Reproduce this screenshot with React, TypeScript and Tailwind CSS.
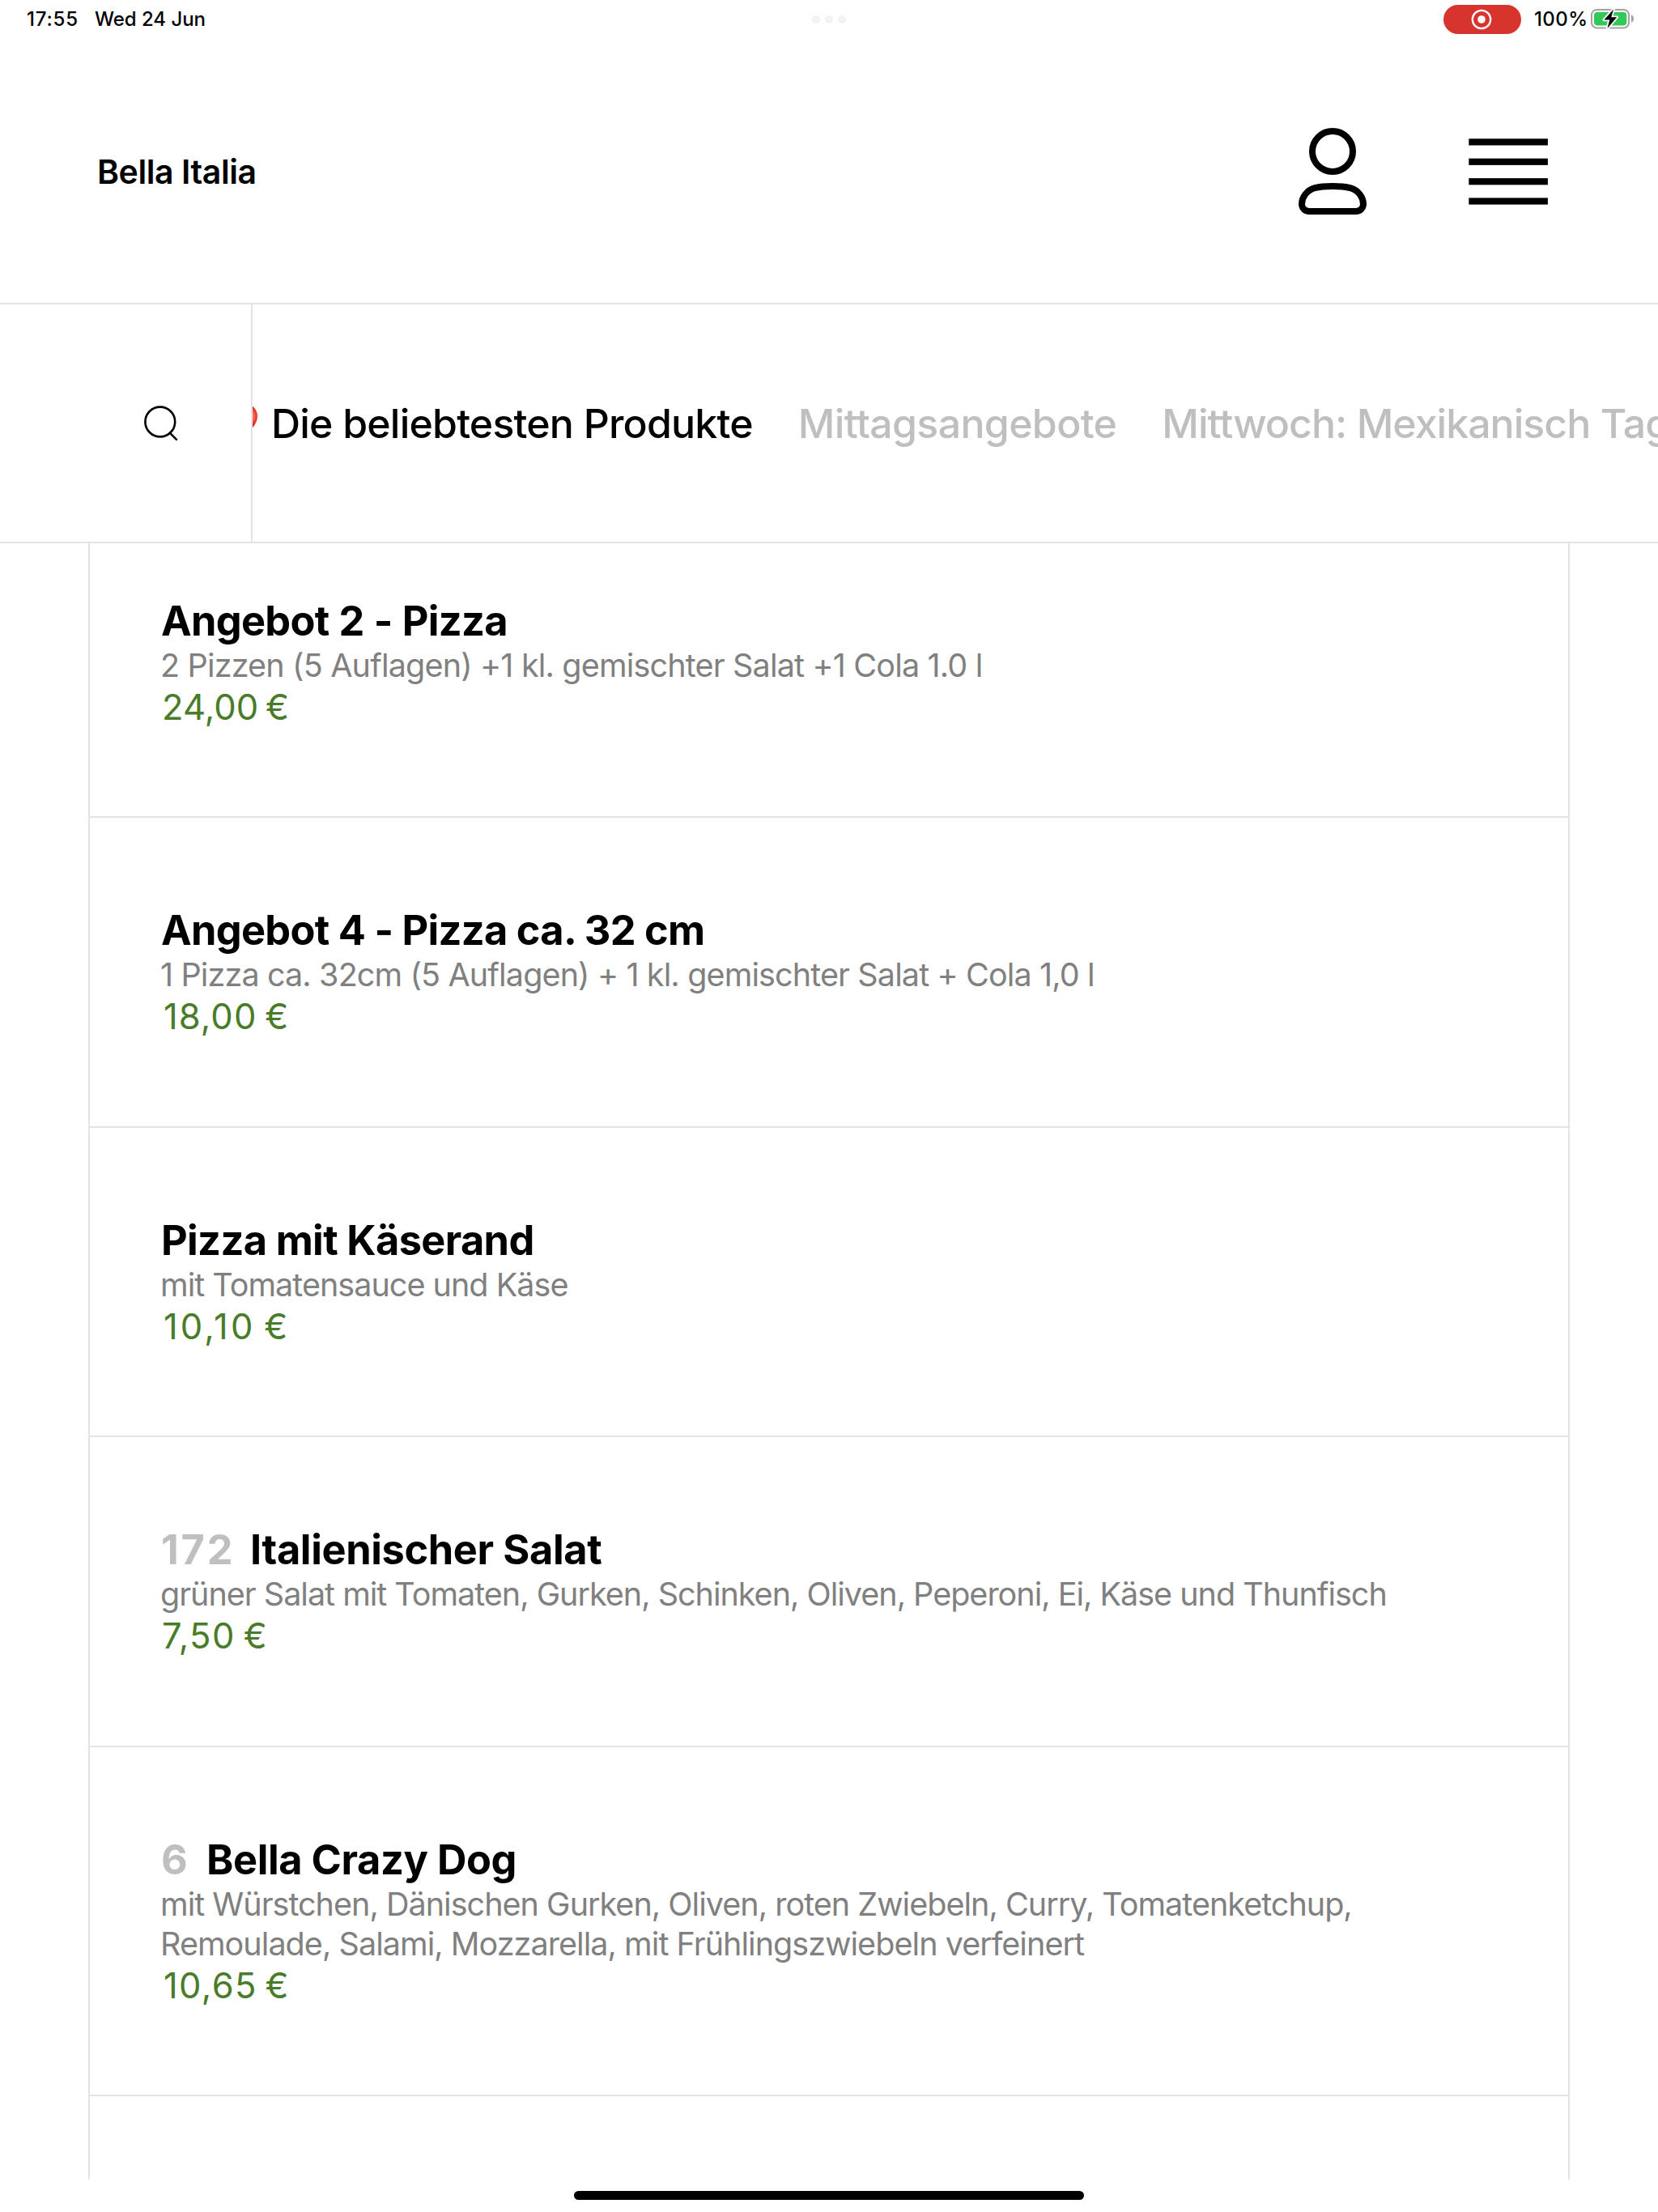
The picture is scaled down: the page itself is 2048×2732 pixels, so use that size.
type Product = {
  number?: { text: string; className: string };
  title: { text: string; className: string };
  description: { text: string; className: string }[];
  price: { text: string; className: string };
  className: string;
};

const products: Product[] = [
  {
    title: { text: "Angebot 2 - Pizza", className: "pl-px tracking-[-0.7px] [word-spacing:0.8px]" },
    description: [
      {
        text: "2 Pizzen (5 Auflagen) +1 kl. gemischter Salat +1 Cola 1.0 l",
        className: "tracking-[-0.822px]",
      },
    ],
    price: { text: "24,00 €", className: "pl-0.5 tracking-[0.1px] [word-spacing:-3.6px]" },
    className: "h-[339px] pt-[66px]",
  },
  {
    title: {
      text: "Angebot 4 - Pizza ca. 32 cm",
      className: "pl-px tracking-[-0.709px]",
    },
    description: [
      {
        text: "1 Pizza ca. 32cm (5 Auflagen) + 1 kl. gemischter Salat + Cola 1,0 l",
        className: "tracking-[-0.866px]",
      },
    ],
    price: { text: "18,00 €", className: "pl-1 tracking-[1.1px] [word-spacing:-3.6px]" },
    className: "h-[383px] pt-[109px]",
  },
  {
    title: { text: "Pizza mit Käserand", className: "pl-px tracking-[-0.647px]" },
    description: [{ text: "mit Tomatensauce und Käse", className: "tracking-[-0.968px]" }],
    price: { text: "10,10 €", className: "pl-1 tracking-[3.1px] [word-spacing:-4.5px]" },
    className: "h-[382px] pt-[109px]",
  },
  {
    number: { text: "172", className: "w-[111px] pl-px tracking-[2.8px]" },
    title: { text: "Italienischer Salat", className: "tracking-[-0.38px]" },
    description: [
      {
        text: "grüner Salat mit Tomaten, Gurken, Schinken, Oliven, Peperoni, Ei, Käse und Thunfisch",
        className: "tracking-[-0.997px]",
      },
    ],
    price: { text: "7,50 €", className: "pl-0.5 tracking-[1.5px] [word-spacing:-4px]" },
    className: "h-[383px] pt-[109px]",
  },
  {
    number: { text: "6", className: "w-[57px] pl-px" },
    title: { text: "Bella Crazy Dog", className: "tracking-[-0.42px]" },
    description: [
      {
        text: "mit Würstchen, Dänischen Gurken, Oliven, roten Zwiebeln, Curry, Tomatenketchup,",
        className: "tracking-[-0.969px]",
      },
      {
        text: "Remoulade, Salami, Mozzarella, mit Frühlingszwiebeln verfeinert",
        className: "tracking-[-0.949px]",
      },
    ],
    price: { text: "10,65 €", className: "pl-1 tracking-[1.4px] [word-spacing:-4px]" },
    className: "h-[431px] pt-[109px]",
  },
];

function BatteryIcon() {
  return (
    <svg width="54" height="27" viewBox="0 0 54 27" fill="none">
      <rect x="1" y="2" width="46" height="22.4" rx="6.5" stroke="#a3a3a3" strokeWidth="2" />
      <rect x="4" y="5" width="40.3" height="16.4" rx="3.8" fill="#34c759" />
      <path d="M50 8.2c2 .8 3 2.6 3 4.8s-1 4-3 4.8z" fill="#a3a3a3" />
      <path
        d="M28 1.5 16.4 14.4h6.8L20.5 25 32.2 11.2h-6.9z"
        fill="#000"
        stroke="#fff"
        strokeWidth="3.6"
        strokeLinejoin="round"
        paintOrder="stroke"
      />
    </svg>
  );
}

function StatusBar() {
  return (
    <div className="relative flex h-[50px] items-center pb-[3px] pl-[33px] text-2xl leading-8 font-[450]">
      <span className="w-[84px] tracking-[0.8px]">17:55</span>
      <span className="tracking-[-0.05px]">Wed 24 Jun</span>
      <div className="absolute top-[19px] left-[1003px] flex gap-1.5">
        <span className="size-2.5 rounded-full bg-[#f2f2f4]" />
        <span className="size-2.5 rounded-full bg-[#f2f2f4]" />
        <span className="size-2.5 rounded-full bg-[#f2f2f4]" />
      </div>
      <div className="ml-auto flex items-center pr-[29px]">
        <span className="mr-4 flex h-9 w-24 items-center justify-center rounded-full bg-[#d6342c] pr-0.5">
          <svg width="26" height="26" viewBox="0 0 26 26" fill="none">
            <circle cx="13" cy="13" r="11.2" stroke="#fff" strokeWidth="2.3" />
            <circle cx="13" cy="13" r="4.8" fill="#fff" />
          </svg>
        </span>
        <span className="w-[70px] tracking-[0.4px]">100%</span>
        <BatteryIcon />
      </div>
    </div>
  );
}

function Header() {
  return (
    <header className="flex h-[326px] items-center border-b-2 border-[#e4e4e4] pr-[136px] pl-[120px]">
      <h1 className="pt-0.5 text-[41px] font-semibold tracking-[-0.43px]">Bella Italia</h1>
      <button className="mr-[126px] mb-0.5 ml-auto" aria-label="Konto">
        <svg width="84" height="108" viewBox="0 0 84 108" fill="none" stroke="#000" strokeWidth="8">
          <circle cx="42" cy="30" r="25" />
          <path d="M13 104H71C76 104 80 100 80 95C80 87 74 78 64 75.2C58 73.6 50 73 42 73C34 73 26 73.6 20 75.2C10 78 4 87 4 95C4 100 8 104 13 104Z" />
        </svg>
      </button>
      <button aria-label="Menü">
        <svg width="98" height="82" viewBox="0 0 98 82">
          <rect x="0.3" y="0.3" width="97.6" height="8.2" />
          <rect x="0.3" y="24.7" width="97.6" height="8.2" />
          <rect x="0.3" y="49.1" width="97.6" height="8.2" />
          <rect x="0.3" y="73.4" width="97.6" height="8.2" />
        </svg>
      </button>
    </header>
  );
}

function HeartIcon() {
  return (
    <svg className="-ml-11 shrink-0" width="50" height="50" viewBox="0 0 50 50">
      <defs>
        <radialGradient id="heart" gradientUnits="userSpaceOnUse" cx="37" cy="16" r="14">
          <stop offset="0" stopColor="#ff9c90" />
          <stop offset="0.5" stopColor="#f5806f" />
          <stop offset="0.85" stopColor="#ee3a2a" />
          <stop offset="1" stopColor="#cf1f14" />
        </radialGradient>
      </defs>
      <path
        d="M37 1C45 2 50 9 50 16C50 27 38 38 25 46C12 38 0 27 0 16C0 9 5 2 13 1C18 1 23 4 25 8C27 4 32 1 37 1Z"
        fill="url(#heart)"
      />
    </svg>
  );
}

function CategoryBar() {
  return (
    <nav className="flex h-[295px] border-b-2 border-[#e4e4e4]">
      <button
        className="flex w-[312px] shrink-0 items-center border-r-2 border-[#e4e4e4] pb-0.5 pl-[177px]"
        aria-label="Suche"
      >
        <svg width="43" height="44" viewBox="0 0 43 44" fill="none" stroke="#000" strokeWidth="2.6">
          <circle cx="20.8" cy="21" r="18.4" />
          <path d="M32.8 34.6L41 42.8" strokeLinecap="round" />
        </svg>
      </button>
      <div className="flex min-w-0 flex-1 items-center overflow-hidden text-[50px] leading-[60px] font-medium whitespace-nowrap text-[#bfbfbf]">
        <HeartIcon />
        <span className="ml-[17px] tracking-[-0.8px] text-black">Die beliebtesten Produkte</span>
        <span className="ml-14 tracking-[-0.65px]">Mittagsangebote</span>
        <span className="ml-14 tracking-[-0.96px]">Mittwoch: Mexikanisch Tag</span>
      </div>
    </nav>
  );
}

function ProductCard({ product }: { product: Product }) {
  return (
    <article
      className={`border-b-2 border-[#e4e4e4] pl-[87px] whitespace-nowrap ${product.className}`}
    >
      <h2 className="flex text-[50.5px] leading-[60px] font-bold">
        {product.number && (
          <span className={`text-[#bfbfbf] ${product.number.className}`}>{product.number.text}</span>
        )}
        <span className={product.title.className}>{product.title.text}</span>
      </h2>
      <div className="-mb-px pt-px">
        {product.description.map((line) => (
          <p
            key={line.text}
            className={`text-[39.5px] leading-[49px] text-[#808080] ${line.className}`}
          >
            {line.text}
          </p>
        ))}
      </div>
      <p className={`text-[43.5px] leading-[54px] text-[#487c29] ${product.price.className}`}>
        {product.price.text}
      </p>
    </article>
  );
}

export default function App() {
  return (
    <div className="flex h-[2732px] w-[2048px] flex-col overflow-hidden bg-white font-['Inter',sans-serif] text-black">
      <StatusBar />
      <Header />
      <CategoryBar />
      <main className="mr-[109px] ml-[109px] h-[2021px] shrink-0 overflow-hidden border-x-2 border-[#e4e4e4]">
        {products.map((product) => (
          <ProductCard key={product.title.text} product={product} />
        ))}
      </main>
      <div className="mx-auto mt-[14px] h-[11px] w-[630px] shrink-0 rounded-full bg-black" />
    </div>
  );
}
